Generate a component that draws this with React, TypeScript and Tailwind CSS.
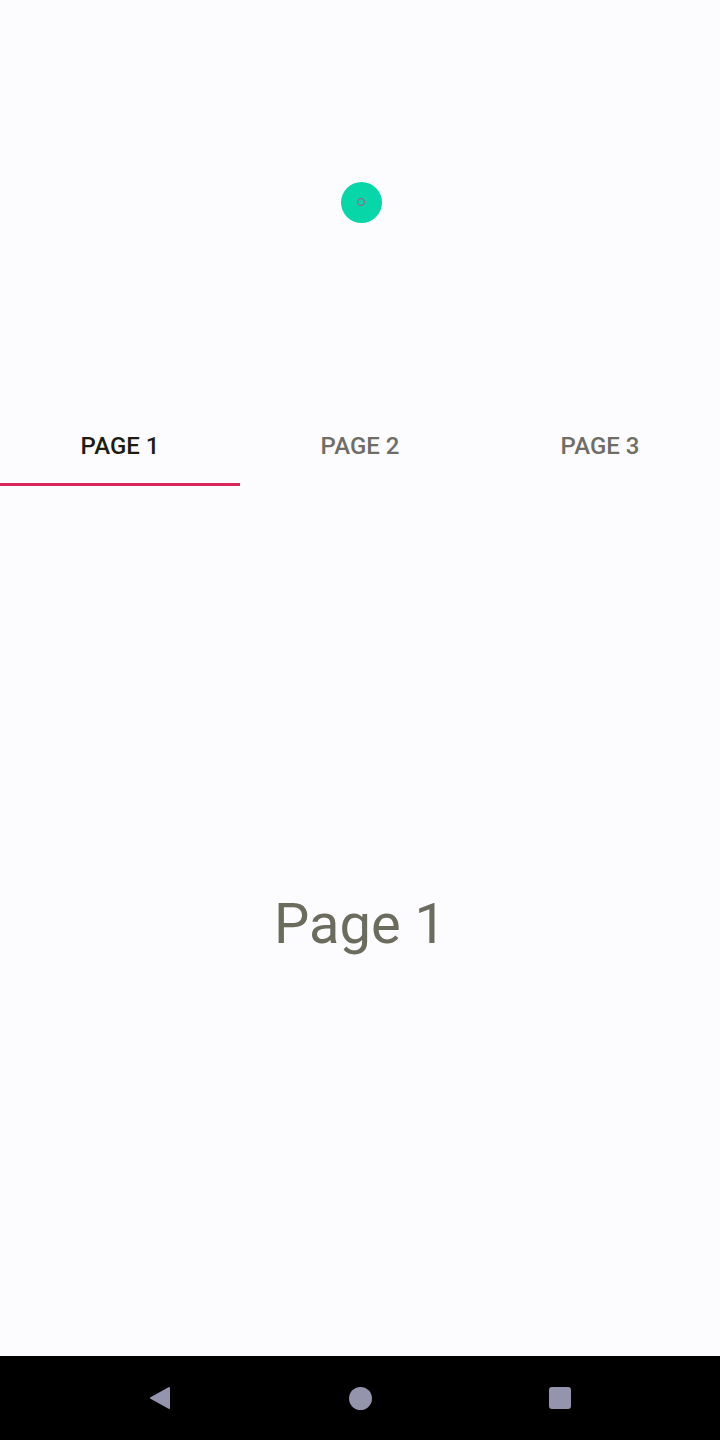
export default function App() {
  const tabs = ['PAGE 1', 'PAGE 2', 'PAGE 3'];
  return (
    <div className="flex h-[1440px] w-[720px] flex-col bg-[#fcfcfe]" style={{ fontFamily: 'Roboto, "Noto Sans", sans-serif' }}>
      {/* header with floating dot */}
      <div className="flex h-[404px] items-center justify-center">
        <div className="ml-[2px] flex h-[41px] w-[41px] items-center justify-center rounded-full bg-[#06d6a8]">
          <div className="h-[8px] w-[8px] rounded-full border border-[#b0508a]" />
        </div>
      </div>

      {/* tabs */}
      <div className="flex h-[82px]">
        {tabs.map((t, i) => (
          <div key={t} className="relative flex flex-1 items-center justify-center pt-[2px]">
            <span className={`text-[24px] font-medium ${i === 0 ? 'text-[#1c1c12]' : 'text-[#6e6e66]'}`}>{t}</span>
            {i === 0 && <div className="absolute bottom-0 left-0 h-[3px] w-full bg-[#d8285a]" />}
          </div>
        ))}
      </div>

      {/* content */}
      <div className="flex flex-1 items-center justify-center pt-[6px]">
        <span className="text-[56px] text-[#6b6b5e]">Page 1</span>
      </div>

      {/* nav bar */}
      <div className="flex h-[84px] items-center justify-center gap-[160px] bg-black">
        <div className="flex w-[40px] justify-center">
          <svg width="22" height="24" viewBox="0 0 22 24">
            <path d="M20 2 L2 12 L20 22 Z" fill="#9494ac" stroke="#9494ac" strokeWidth="2" strokeLinejoin="round" />
          </svg>
        </div>
        <div className="flex w-[40px] justify-center">
          <div className="h-[23px] w-[23px] rounded-full bg-[#9494ac]" />
        </div>
        <div className="flex w-[40px] justify-center">
          <div className="h-[22px] w-[22px] rounded-[3px] bg-[#9494ac]" />
        </div>
      </div>
    </div>
  );
}
